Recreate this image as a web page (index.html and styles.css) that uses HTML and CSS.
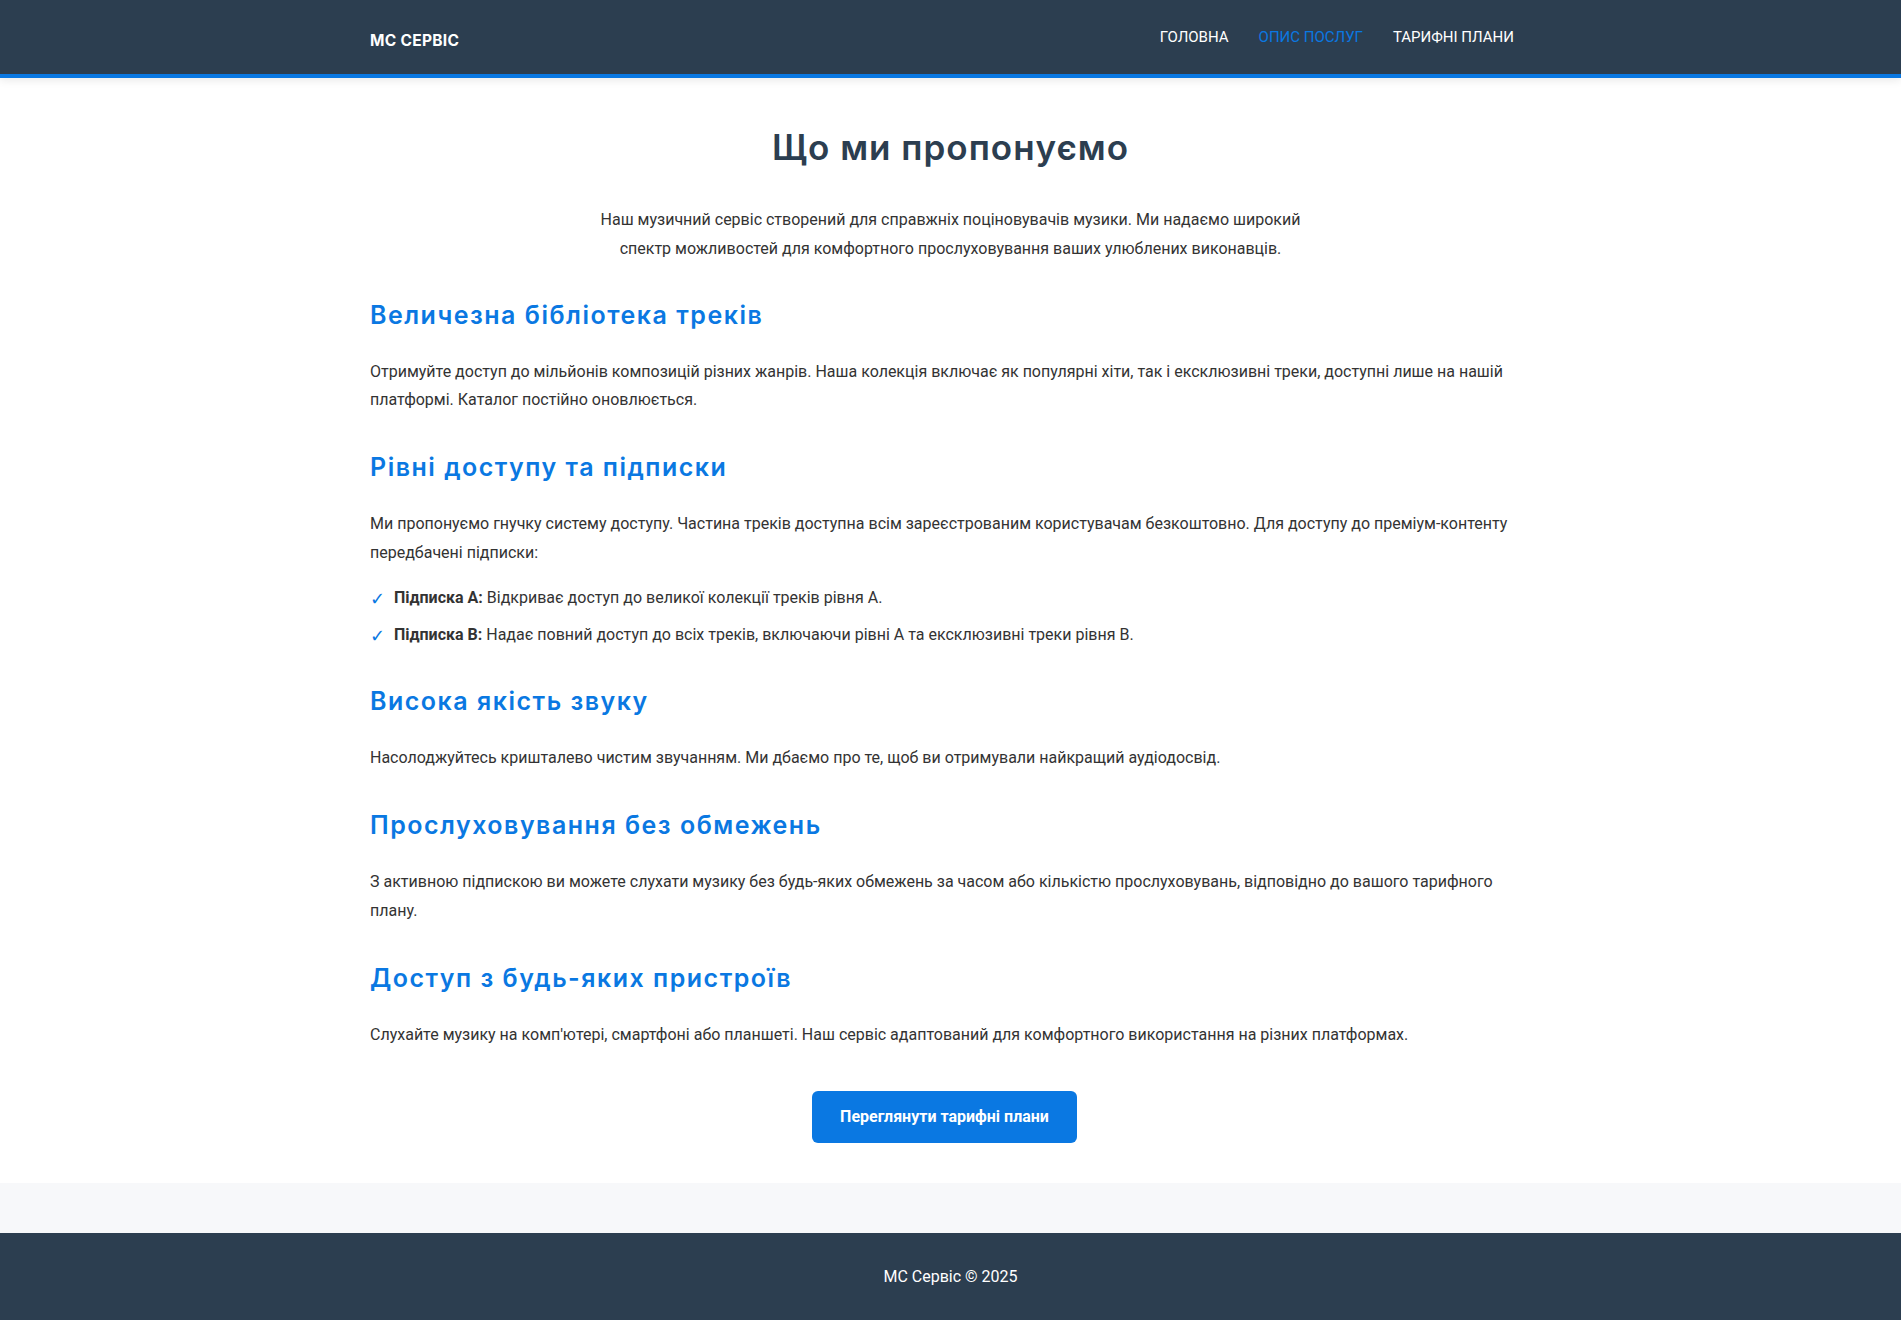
FILE: index.html
```html
<!DOCTYPE html>
<html lang="uk">
<head>
<meta charset="utf-8">
<title>Опис послуг — МС Сервіс</title>
<link rel="stylesheet" href="styles.css">
</head>
<body>
<header class="site-header">
  <div class="container header-inner">
    <a class="logo" href="#">МС СЕРВІС</a>
    <nav class="nav">
      <a class="nav-link" href="#">ГОЛОВНА</a>
      <a class="nav-link active" href="#">ОПИС ПОСЛУГ</a>
      <a class="nav-link" href="#">ТАРИФНІ ПЛАНИ</a>
    </nav>
  </div>
</header>

<main class="main">
  <div class="container">
    <h1 class="page-title">Що ми пропонуємо</h1>
    <p class="intro">Наш музичний сервіс створений для справжніх поціновувачів музики. Ми надаємо широкий спектр можливостей для комфортного прослуховування ваших улюблених виконавців.</p>

    <section class="feature">
      <h2 class="feature-title">Величезна бібліотека треків</h2>
      <p class="feature-text">Отримуйте доступ до мільйонів композицій різних жанрів. Наша колекція включає як популярні хіти, так і ексклюзивні треки, доступні лише на нашій платформі. Каталог постійно оновлюється.</p>
    </section>

    <section class="feature">
      <h2 class="feature-title">Рівні доступу та підписки</h2>
      <p class="feature-text">Ми пропонуємо гнучку систему доступу. Частина треків доступна всім зареєстрованим користувачам безкоштовно. Для доступу до преміум-контенту передбачені підписки:</p>
      <ul class="check-list">
        <li class="check-item"><strong>Підписка A:</strong> Відкриває доступ до великої колекції треків рівня A.</li>
        <li class="check-item"><strong>Підписка B:</strong> Надає повний доступ до всіх треків, включаючи рівні A та ексклюзивні треки рівня B.</li>
      </ul>
    </section>

    <section class="feature">
      <h2 class="feature-title">Висока якість звуку</h2>
      <p class="feature-text">Насолоджуйтесь кришталево чистим звучанням. Ми дбаємо про те, щоб ви отримували найкращий аудіодосвід.</p>
    </section>

    <section class="feature">
      <h2 class="feature-title">Прослуховування без обмежень</h2>
      <p class="feature-text">З активною підпискою ви можете слухати музику без будь-яких обмежень за часом або кількістю прослуховувань, відповідно до вашого тарифного плану.</p>
    </section>

    <section class="feature">
      <h2 class="feature-title">Доступ з будь-яких пристроїв</h2>
      <p class="feature-text">Слухайте музику на комп'ютері, смартфоні або планшеті. Наш сервіс адаптований для комфортного використання на різних платформах.</p>
    </section>

    <div class="cta">
      <a class="btn" href="#">Переглянути тарифні плани</a>
    </div>
  </div>
</main>

<footer class="site-footer">
  <p class="footer-text">МС Сервіс © 2025</p>
</footer>
</body>
</html>
```

FILE: styles.css
```css
* { box-sizing: border-box; }

html, body { height: 100%; }

body {
  margin: 0;
  min-height: 100vh;
  display: flex;
  flex-direction: column;
  background: #f7f8fa;
  color: #333;
  font-family: Roboto, "Liberation Sans", sans-serif;
  font-size: 16px;
  line-height: 1.8;
}

.container {
  width: 100%;
  max-width: 1161px;
  margin: 0 auto;
}

/* Header */
.site-header {
  background: #2c3e50;
  border-bottom: 4px solid #0a78e2;
  box-shadow: 0 3px 8px rgba(0, 0, 0, 0.08);
  position: relative;
  z-index: 1;
}

.header-inner {
  height: 74px;
  display: flex;
  align-items: center;
  justify-content: space-between;
}

.logo {
  font-family: Inter, "Open Sans", sans-serif;
  font-weight: 700;
  font-size: 15.5px;
  color: #fff;
  text-decoration: none;
  padding-top: 7px;
  letter-spacing: 0.3px;
}

.nav {
  display: flex;
  margin-right: 2px;
}

.nav-link {
  color: #fff;
  text-decoration: none;
  font-size: 15px;
  padding: 0 15px;
  line-height: 20px;
}

.nav-link.active { color: #0a78e2; }

/* Main */
.main {
  background: #fff;
  padding: 48px 0 40px;
}

.page-title {
  font-family: Inter, "Open Sans", sans-serif;
  font-weight: 600;
  font-size: 35px;
  line-height: 42px;
  color: #2c3e50;
  text-align: center;
  margin: 0 0 38px;
  letter-spacing: 1px;
}

.intro {
  max-width: 720px;
  margin: 0 auto 37px;
  text-align: center;
}

.feature { margin-bottom: 38px; }

.feature-title {
  font-family: Inter, "Open Sans", sans-serif;
  font-weight: 600;
  font-size: 25px;
  line-height: 29px;
  color: #0a78e2;
  margin: 0 0 28px;
  letter-spacing: 1.5px;
}

.feature-text { margin: 0; }

.check-list {
  list-style: none;
  margin: 16px 0 0;
  padding: 0;
}

.check-item {
  position: relative;
  padding-left: 24px;
  margin-bottom: 8px;
}

.check-item:last-child { margin-bottom: 0; }

.check-item::before {
  content: "✓";
  position: absolute;
  left: 0;
  top: -1px;
  color: #0a78e2;
  font-weight: 700;
  font-family: "DejaVu Sans", sans-serif;
  font-size: 18px;
}

.check-item strong { font-weight: 700; }

.cta {
  display: flex;
  justify-content: center;
  padding-top: 3px;
}

.btn {
  display: inline-block;
  margin-right: 12px;
  background: #0a78e2;
  color: #fff;
  text-decoration: none;
  font-weight: 700;
  font-size: 16px;
  line-height: 22px;
  padding: 15px 28px;
  border-radius: 6px;
}

/* Footer */
.site-footer {
  margin-top: auto;
  background: #2c3e50;
  color: #fff;
  text-align: center;
  padding: 29px 0;
}

.footer-text {
  margin: 0;
  line-height: 29px;
}
```
